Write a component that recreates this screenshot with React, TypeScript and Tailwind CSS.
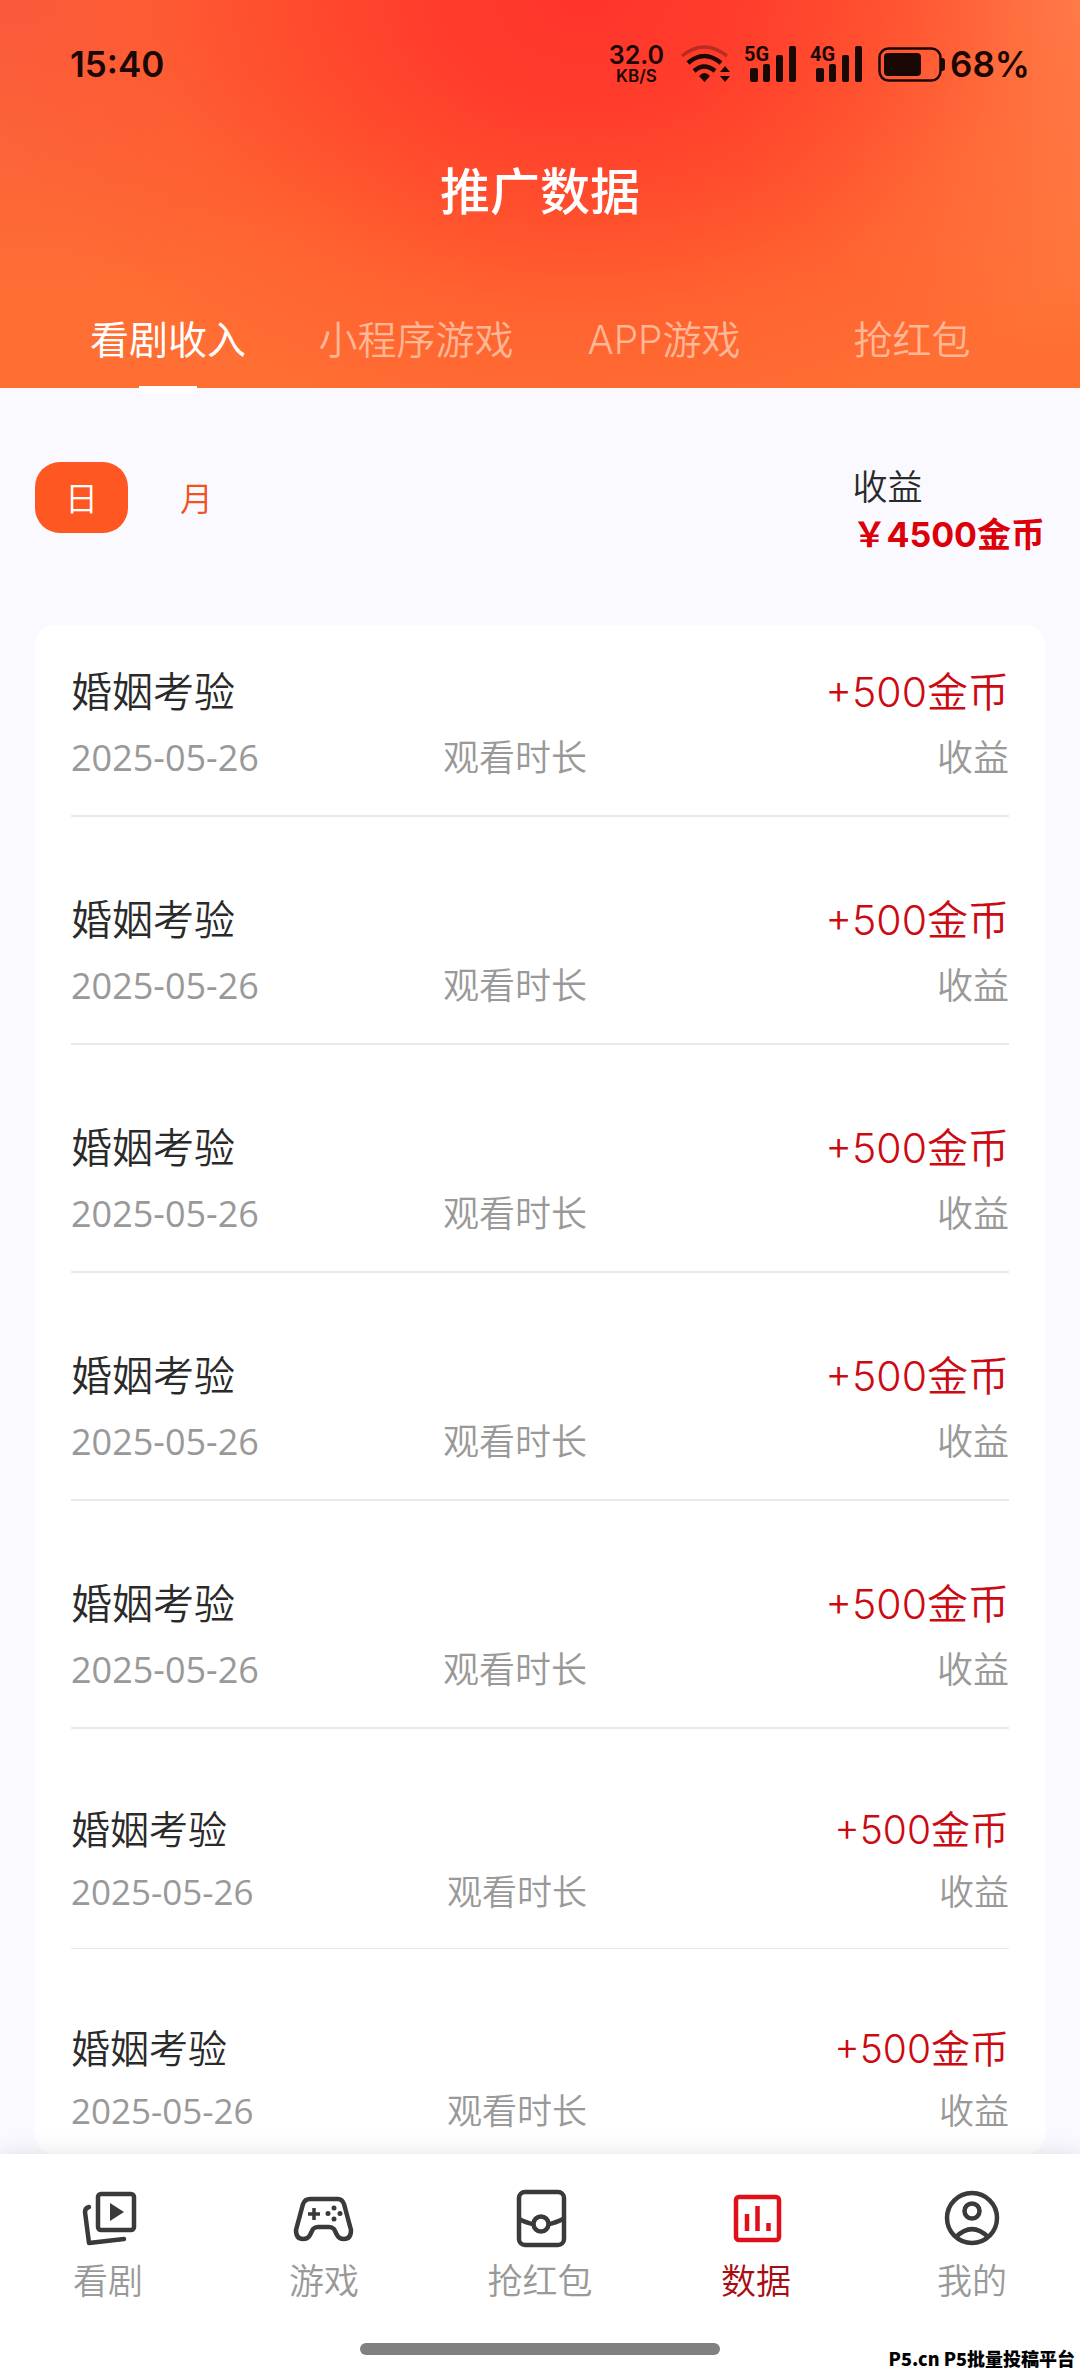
import { useState } from 'react';
import type { ReactNode } from 'react';

type Earning = {
  id: number;
  title: string;
  date: string;
  amount: string;
  compact?: boolean;
};

const earnings: Earning[] = [
  { id: 1, title: '婚姻考验', date: '2025-05-26', amount: '+500金币' },
  { id: 2, title: '婚姻考验', date: '2025-05-26', amount: '+500金币' },
  { id: 3, title: '婚姻考验', date: '2025-05-26', amount: '+500金币' },
  { id: 4, title: '婚姻考验', date: '2025-05-26', amount: '+500金币' },
  { id: 5, title: '婚姻考验', date: '2025-05-26', amount: '+500金币' },
  { id: 6, title: '婚姻考验', date: '2025-05-26', amount: '+500金币', compact: true },
  { id: 7, title: '婚姻考验', date: '2025-05-26', amount: '+500金币', compact: true },
];

const tabs = ['看剧收入', '小程序游戏', 'APP游戏', '抢红包'];
const periods = ['日', '月'];

function SignalBars({ label }: { label: string }) {
  return (
    <div className="relative h-9 w-[53px]">
      <span className="absolute top-0 left-0 font-[Roboto] text-[20px] leading-4 font-bold">
        {label}
      </span>
      <svg viewBox="0 0 53 36" className="h-full w-full" fill="currentColor" aria-hidden="true">
        <rect x="6" y="22" width="8" height="14" rx="2" />
        <rect x="19" y="18" width="7" height="18" rx="2" />
        <rect x="32" y="9" width="7" height="27" rx="2" />
        <rect x="45" y="0" width="7" height="36" rx="2" />
      </svg>
    </div>
  );
}

function WifiIcon() {
  return (
    <svg viewBox="0 0 52 38" className="h-[38px] w-[52px]" fill="none" aria-hidden="true">
      <path d="M2 11 Q24 -7 47 11" stroke="#1a0804" strokeOpacity="0.3" strokeWidth="3.500" />
      <path d="M8 18 Q24 4 41 18" stroke="currentColor" strokeWidth="4.500" />
      <path d="M14 26 Q24 17 35 26" stroke="currentColor" strokeWidth="4.500" />
      <path d="M19 31 Q24.500 25 30 31 L24.500 37Z" fill="currentColor" />
      <path d="M40 27 L45 21 L50 27Z M40 31 L45 37 L50 31Z" fill="currentColor" />
    </svg>
  );
}

function BatteryIcon() {
  return (
    <svg viewBox="0 0 68 36" className="h-9 w-[68px]" fill="none" aria-hidden="true">
      <rect x="1.500" y="2.500" width="61" height="32" rx="9" stroke="currentColor" strokeWidth="2.500" />
      <rect x="6" y="7" width="37" height="23" rx="4" fill="currentColor" />
      <path d="M63 12 h1 a3 3 0 0 1 3 3 v7 a3 3 0 0 1 -3 3 h-1Z" fill="currentColor" />
    </svg>
  );
}

function StatusBar() {
  return (
    <div className="flex h-32 items-center justify-between pr-[50px] pl-[70px] text-[#1a0804]">
      <span className="text-[35px] leading-10 font-semibold">15:40</span>
      <div className="flex items-center">
        <div className="mr-4 flex flex-col items-center font-semibold">
          <span className="text-[25px] leading-6">32.0</span>
          <span className="text-[17px] leading-[18px]">KB/S</span>
        </div>
        <WifiIcon />
        <div className="ml-3 flex gap-[13px]">
          <SignalBars label="5G" />
          <SignalBars label="4G" />
        </div>
        <div className="mr-1 ml-[15px]">
          <BatteryIcon />
        </div>
        <span className="text-[35px] leading-10 font-semibold">68%</span>
      </div>
    </div>
  );
}

function EarningRow({ item, last }: { item: Earning; last: boolean }) {
  const box = item.compact ? 'pt-[35px] gap-[2px]' : 'pt-[37px] gap-1.5';
  const line = last
    ? 'pb-[13px]'
    : item.compact
      ? 'mb-[35px] border-b border-[#e8e8e8] pb-[26px]'
      : 'mb-9 border-b-2 border-[#e9e9e9] pb-[27px]';
  const big = item.compact ? 'text-[39px]' : 'text-[41px]';
  const small = item.compact ? 'text-[35px]' : 'text-[36px]';

  return (
    <li className={`flex flex-col leading-[60px] ${box} ${line}`}>
      <div className={`flex justify-between ${big}`}>
        <h2 className="text-[#2a2a2a]">{item.title}</h2>
        <span className="text-[#cc0a12]">{item.amount}</span>
      </div>
      <div
        className={`grid grid-cols-[11fr_9fr] font-['Open_Sans','Noto_Sans_CJK_SC',sans-serif] text-[#999] ${small}`}
      >
        <div className="flex justify-between">
          <time className="font-normal">{item.date}</time>
          <span>观看时长</span>
        </div>
        <span className="text-right">收益</span>
      </div>
    </li>
  );
}

function NavIcon({ children }: { children: ReactNode }) {
  return (
    <svg
      viewBox="0 0 64 64"
      className="size-16"
      fill="none"
      stroke="currentColor"
      strokeWidth="4.500"
      strokeLinejoin="round"
      aria-hidden="true"
    >
      {children}
    </svg>
  );
}

const navItems = [
  {
    label: '看剧',
    icon: (
      <>
        <rect x="22" y="8" width="36" height="36" rx="3" />
        <path d="M34 17 L48 26 L34 35Z" fill="currentColor" stroke="none" />
        <path d="M13 21 Q9 22 9 26 L13 57 L48 53" strokeLinecap="round" />
      </>
    ),
  },
  {
    label: '游戏',
    icon: (
      <>
        <path d="M18 13 H46 Q50 13 52 18 L59 44 Q59 53 52 53 Q47 53 45 49 L42 43 Q40 41 37 41 H26 Q23 41 21 43 L18 49 Q16 53 11 53 Q4 53 4 44 L11 18 Q13 13 18 13Z" />
        <path d="M22 22 V34 M16 28 H28" strokeWidth="3.500" />
        <g fill="currentColor" stroke="none">
          <circle cx="42" cy="22" r="2.500" />
          <circle cx="42" cy="33" r="2.500" />
          <circle cx="36" cy="27.500" r="2.500" />
          <circle cx="48" cy="27.500" r="2.500" />
        </g>
      </>
    ),
  },
  {
    label: '抢红包',
    icon: (
      <>
        <rect x="11" y="6" width="45" height="53" rx="6" />
        <circle cx="33" cy="38" r="7.500" />
        <path d="M11 33 Q19 37 25 38 M41 38 Q47 37 55 33" />
      </>
    ),
  },
  {
    label: '数据',
    icon: (
      <>
        <rect x="12" y="11" width="43" height="43" rx="3" />
        <path d="M23 28 V45 M33.500 20 V45 M44.500 37 V45" />
      </>
    ),
  },
  {
    label: '我的',
    icon: (
      <>
        <circle cx="32" cy="32" r="25" />
        <circle cx="32" cy="25" r="7.500" />
        <path d="M16 51 Q32 35 48 51" />
      </>
    ),
  },
];

export default function App() {
  const [tab, setTab] = useState('看剧收入');
  const [period, setPeriod] = useState('日');

  return (
    <div className="relative min-h-screen bg-[#f9f9ff] font-[Inter,'Noto_Sans_CJK_SC',sans-serif] font-[350]">
      <header className="bg-[#ff6f33] bg-[radial-gradient(ellipse_58%_115%_at_54%_0%,#ff342c_0%,#ff382be8_25%,#ff442bc0_48%,#ff552d78_70%,transparent_100%),radial-gradient(ellipse_35%_90%_at_100%_0%,#ff8c55_0%,transparent_100%),radial-gradient(ellipse_40%_80%_at_0%_0%,#f95a3e_0%,transparent_100%)]">
        <StatusBar />
        <h1 className="text-center text-[50px] leading-[128px] font-medium text-white">推广数据</h1>
        <nav className="grid h-[132px] grid-cols-4 px-11">
          {tabs.map((name) => (
            <button
              key={name}
              type="button"
              onClick={() => setTab(name)}
              className={`relative pt-9 text-[39px] leading-[60px] ${
                tab === name ? 'font-normal text-white' : 'text-[#ffb795]'
              }`}
            >
              {name}
              {tab === name ? (
                <span className="absolute -bottom-1.5 left-1/2 h-2 w-[58px] -translate-x-1/2 bg-white" />
              ) : null}
            </button>
          ))}
        </nav>
      </header>

      <main className="px-[35px]">
        <section className="flex h-[237px] items-start justify-between pt-[74px]">
          <div className="flex gap-[22px]">
            {periods.map((name) => (
              <button
                key={name}
                type="button"
                onClick={() => setPeriod(name)}
                className={`h-[71px] w-[93px] rounded-[25px] pt-1 text-[33px] ${
                  period === name ? 'bg-[#ff5722] text-white' : 'text-[#f4511e]'
                }`}
              >
                {name}
              </button>
            ))}
          </div>
          <div className="pt-0.5 leading-[47px]">
            <div className="text-[35px] text-[#2a2a2a]">收益</div>
            <div className="text-[34px] font-bold text-[#dc0008]">￥4500金币</div>
          </div>
        </section>

        <ul className="rounded-[20px] bg-white px-9">
          {earnings.map((item, i) => (
            <EarningRow key={item.id} item={item} last={i === earnings.length - 1} />
          ))}
        </ul>
      </main>

      <footer className="sticky bottom-0 bg-white shadow-[0_-2px_20px_rgba(0,0,0,0.1)]">
        <nav className="grid h-[189px] grid-cols-5 pt-8">
          {navItems.map((item) => {
            const active = item.label === '数据';
            return (
              <a
                key={item.label}
                href="#"
                className={`flex flex-col items-center ${active ? 'text-[#e0101a]' : 'text-[#3a3a3a]'}`}
              >
                <NavIcon>{item.icon}</NavIcon>
                <span
                  className={`text-[35px] leading-[62px] ${active ? 'text-[#a80d12]' : 'text-[#999]'}`}
                >
                  {item.label}
                </span>
              </a>
            );
          })}
        </nav>
        <div className="mx-auto h-3 w-1/3 rounded-full bg-[#808080]" />
        <div className="h-[21px]" />
        <span className="absolute right-[5px] bottom-1.5 font-['Noto_Sans_CJK_SC',sans-serif] text-[18px] leading-6 font-black text-black">
          P5.cn P5批量投稿平台
        </span>
      </footer>
    </div>
  );
}
